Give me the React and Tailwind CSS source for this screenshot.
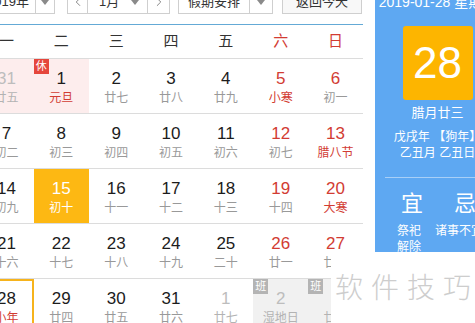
import React from "react";
import { ChevronLeft, ChevronRight } from "lucide-react";

const WEEK = ["一", "二", "三", "四", "五", "六", "日"];

const ROWS = [
  [
    { d: "31", l: "廿五", other: true, rest: true },
    { d: "1", l: "元旦", fest: true, rest: true, badge: "休" },
    { d: "2", l: "廿七" },
    { d: "3", l: "廿八" },
    { d: "4", l: "廿九" },
    { d: "5", l: "小寒", fest: true },
    { d: "6", l: "初一" },
  ],
  [
    { d: "7", l: "初二" },
    { d: "8", l: "初三" },
    { d: "9", l: "初四" },
    { d: "10", l: "初五" },
    { d: "11", l: "初六" },
    { d: "12", l: "初七" },
    { d: "13", l: "腊八节", fest: true },
  ],
  [
    { d: "14", l: "初九" },
    { d: "15", l: "初十", today: true },
    { d: "16", l: "十一" },
    { d: "17", l: "十二" },
    { d: "18", l: "十三" },
    { d: "19", l: "十四" },
    { d: "20", l: "大寒", fest: true },
  ],
  [
    { d: "21", l: "十六" },
    { d: "22", l: "十七" },
    { d: "23", l: "十八" },
    { d: "24", l: "十九" },
    { d: "25", l: "二十" },
    { d: "26", l: "廿一" },
    { d: "27", l: "廿二" },
  ],
  [
    { d: "28", l: "小年", fest: true, selected: true },
    { d: "29", l: "廿四" },
    { d: "30", l: "廿五" },
    { d: "31", l: "廿六" },
    { d: "1", l: "廿七", other: true },
    { d: "2", l: "湿地日", other: true, work: true, badge: "班" },
    { d: "3", l: "廿九", other: true, work: true, badge: "班" },
  ],
];

function Caret() {
  return (
    <svg width="8" height="5" viewBox="0 0 8 5">
      <path d="M0 0h8L4 5z" fill="#8a8a8a" />
    </svg>
  );
}

function Cell({ c, col }) {
  const weekend = col >= 5;
  let bg = "";
  if (c.rest) bg = "bg-[#fdeded]";
  if (c.work) bg = "bg-[#f1f1f1]";
  if (c.today) bg = "bg-[#fdb813]";

  let digit = weekend ? "text-[#d23c33]" : "text-[#1c1c1c]";
  let lunar = c.fest ? "text-[#d23c33]" : "text-[#999]";
  if (c.other) {
    digit = "text-[#bdbdbd]";
    lunar = "text-[#b3b3b3]";
  }
  if (c.today) {
    digit = "text-white";
    lunar = "text-white";
  }

  return (
    <div
      className={`relative flex flex-col items-center ${bg} ${
        c.selected ? "border-2 border-[#f6b31c] pt-[8px]" : "pt-[10px]"
      }`}
    >
      {c.badge && (
        <span
          className={`absolute top-0 left-0 w-[15px] h-[15px] flex items-center justify-center text-[11px] leading-none text-white ${
            c.badge === "休" ? "bg-[#e5463c]" : "bg-[#b4b4b4]"
          }`}
        >
          {c.badge}
        </span>
      )}
      <span className={`text-[17px] leading-[20px] ${digit}`}>{c.d}</span>
      <span className={`mt-[1px] text-[12px] leading-[16px] whitespace-nowrap ${lunar}`}>
        {c.l}
      </span>
    </div>
  );
}

export default function App() {
  return (
    <div
      className="relative w-[475px] h-[323px] overflow-hidden bg-white flex items-start"
      style={{ fontFamily: '"Liberation Sans", "Noto Sans CJK SC", sans-serif' }}
    >
      {/* calendar side */}
      <div className="ml-[-21px] w-[384px] shrink-0">
        <div className="mt-[-10px] h-[24px] flex text-[13px] text-[#333]">
          <div className="w-[76px] flex border border-[#cfcfcf] bg-white">
            <span className="w-[56px] pl-[7px] flex items-center border-r border-[#cfcfcf]">
              2019年
            </span>
            <span className="flex-1 flex items-center justify-center">
              <Caret />
            </span>
          </div>
          <div className="ml-[12px] w-[103px] flex border border-[#cfcfcf] bg-white">
            <span className="w-[20px] flex items-center justify-center border-r border-[#cfcfcf] text-[#777]">
              <ChevronLeft size={14} strokeWidth={1.5} />
            </span>
            <span className="w-[60px] flex items-center pl-[11px] pr-[8px] justify-between border-r border-[#cfcfcf]">
              1月
              <Caret />
            </span>
            <span className="flex-1 flex items-center justify-center text-[#777]">
              <ChevronRight size={14} strokeWidth={1.5} />
            </span>
          </div>
          <div className="ml-[8px] w-[95px] flex border border-[#cfcfcf] bg-white">
            <span className="w-[71px] pl-[9px] flex items-center border-r border-[#cfcfcf]">
              假期安排
            </span>
            <span className="flex-1 flex items-center justify-center">
              <Caret />
            </span>
          </div>
          <div className="ml-[9px] w-[80px] flex items-center justify-center border border-[#cfcfcf] bg-[#f8f8f8]">
            返回今天
          </div>
        </div>

        <div className="mt-[10px] h-[35px] border-t border-b border-t-[#64aad6] border-b-[#dcdcdc] grid grid-cols-7 items-center text-[15px]">
          {WEEK.map((w, i) => (
            <span
              key={w}
              className={`text-center ${i >= 5 ? "text-[#d23c33]" : "text-[#333]"}`}
            >
              {w}
            </span>
          ))}
        </div>

        {ROWS.map((row, r) => (
          <div key={r} className="h-[55px] grid grid-cols-7 border-b border-[#dcdcdc]">
            {row.map((c, i) => (
              <Cell key={i} c={c} col={i} />
            ))}
          </div>
        ))}
      </div>

      {/* right panel */}
      <div className="ml-[12px] w-[125px] h-[323px] shrink-0 bg-[#5ea8f2] text-white flex flex-col">
        <div className="mt-[-6px] text-[14px] leading-[16px] text-center whitespace-nowrap">
          2019-01-28 星期一
        </div>
        <div className="mt-[16px] mx-auto w-[70px] h-[74px] rounded-[3px] bg-[#fdb500] flex items-center justify-center text-[44px] leading-none">
          28
        </div>
        <div className="mt-[4px] text-[13px] leading-[18px] text-center">腊月廿三</div>
        <div className="mt-[7px] text-[12px] leading-[16px] text-center whitespace-nowrap">
          戊戌年 【狗年】
        </div>
        <div className="text-[12px] leading-[16px] text-center whitespace-nowrap">
          乙丑月 乙丑日
        </div>
        <div className="mt-[16px] mx-[10px] h-px bg-[#a8cff7]" />
        <div className="mt-[13px] flex text-[22px] leading-[26px]">
          <span className="ml-[26px]">宜</span>
          <span className="ml-[31px]">忌</span>
        </div>
        <div className="mt-[6px] pl-[22px] flex text-[12px] leading-[16px]">
          <span className="w-[24px] shrink-0">祭祀 解除</span>
          <span className="ml-[14px] whitespace-nowrap">诸事不宜</span>
        </div>
      </div>

      {/* watermark */}
      <div className="absolute left-[331px] top-[252px] right-0 bottom-0 bg-white pl-[4px] pt-[17px]">
        <span
          className="text-[28px] leading-[34px] tracking-[8px] text-[#cdcdcd] font-light whitespace-nowrap"
          style={{ fontFamily: '"Noto Sans CJK SC", sans-serif' }}
        >
          软件技巧
        </span>
      </div>
    </div>
  );
}
